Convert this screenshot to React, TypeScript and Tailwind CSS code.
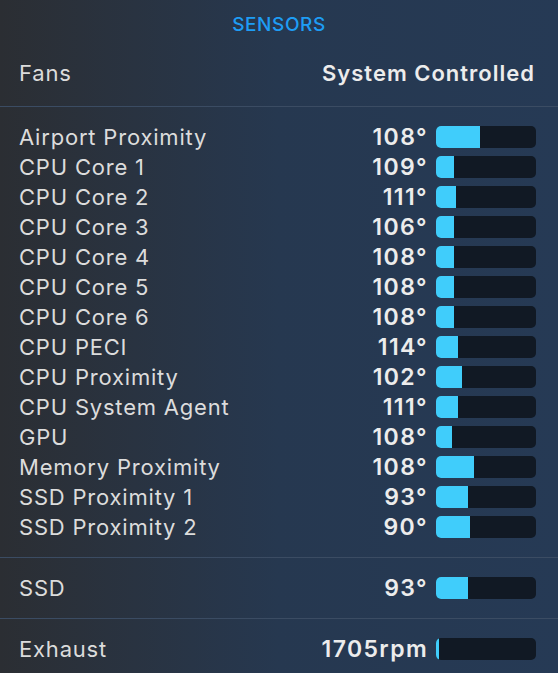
import React from "react";

type Sensor = { name: string; value: string; fill: number };

const sensors: Sensor[] = [
  { name: "Airport Proximity", value: "108°", fill: 44 },
  { name: "CPU Core 1", value: "109°", fill: 18 },
  { name: "CPU Core 2", value: "111°", fill: 20 },
  { name: "CPU Core 3", value: "106°", fill: 18 },
  { name: "CPU Core 4", value: "108°", fill: 18 },
  { name: "CPU Core 5", value: "108°", fill: 18 },
  { name: "CPU Core 6", value: "108°", fill: 18 },
  { name: "CPU PECI", value: "114°", fill: 22 },
  { name: "CPU Proximity", value: "102°", fill: 26 },
  { name: "CPU System Agent", value: "111°", fill: 22 },
  { name: "GPU", value: "108°", fill: 16 },
  { name: "Memory Proximity", value: "108°", fill: 38 },
  { name: "SSD Proximity 1", value: "93°", fill: 32 },
  { name: "SSD Proximity 2", value: "90°", fill: 34 },
];

function Bar({ fill }: { fill: number }) {
  return (
    <div className="h-[22px] w-[100px] rounded-[5px] bg-[#111924] overflow-hidden flex">
      <div className="h-full bg-[#40cdfb]" style={{ width: fill }} />
    </div>
  );
}

function Row({ name, value, fill }: Sensor) {
  return (
    <div className="flex items-center h-[30px]">
      <span className="flex-1 text-[#dcdcdc]">{name}</span>
      <span className="text-[23px] font-semibold tracking-[1.4px] text-[#ececec] mr-[8px]">{value}</span>
      <Bar fill={fill} />
    </div>
  );
}

export default function App() {
  return (
    <div
      className="w-[558px] h-[673px] overflow-hidden bg-gradient-to-r from-[#2b2e33] via-[#263850] to-[#263a55] text-[22px] leading-none tracking-[0.8px]"
      style={{ fontFamily: "Inter, 'Liberation Sans', sans-serif" }}
    >
      <div className="h-[48px] flex items-center justify-center">
        <span className="text-[19px] font-medium text-[#1e9df5] tracking-[0.6px]">SENSORS</span>
      </div>
      <div className="flex items-center justify-between h-[50px] mb-[8px] pl-[19px] pr-[23px]">
        <span className="text-[#dcdcdc]">Fans</span>
        <span className="font-semibold tracking-[1px] text-[#ececec]">System Controlled</span>
      </div>
      <div className="h-px bg-[#3b4c63]" />
      <div className="py-[15px] pl-[19px] pr-[22px]">
        {sensors.map((s) => (
          <Row key={s.name} {...s} />
        ))}
      </div>
      <div className="h-px bg-[#3b4c63]" />
      <div className="py-[15px] pl-[19px] pr-[22px]">
        <Row name="SSD" value="93°" fill={32} />
      </div>
      <div className="h-px bg-[#3b4c63]" />
      <div className="py-[15px] pl-[19px] pr-[22px]">
        <Row name="Exhaust" value="1705rpm" fill={3} />
      </div>
    </div>
  );
}
